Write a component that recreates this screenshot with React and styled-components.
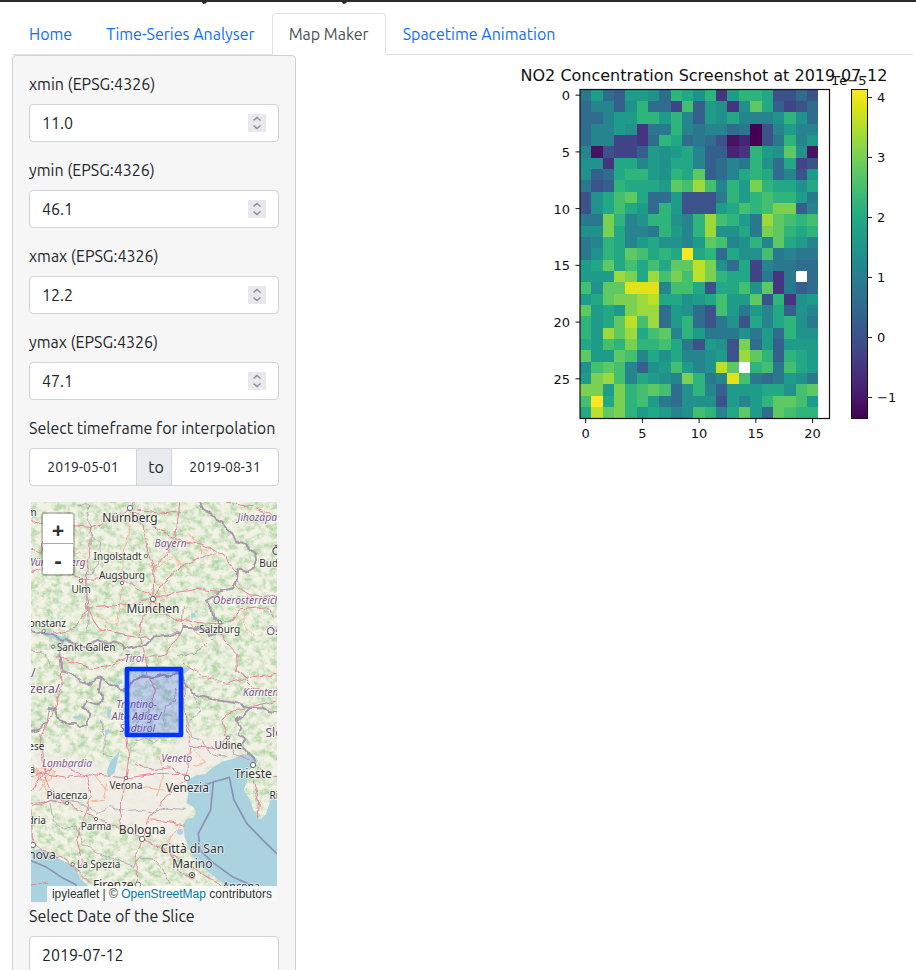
import React from "react";
import styled, { createGlobalStyle } from "styled-components";

const GlobalStyle = createGlobalStyle`
  *, *::before, *::after { box-sizing: border-box; }
  html { scrollbar-width: none; }
  body {
    margin: 0;
    background: #fff;
    color: #212529;
    font-family: Ubuntu, "Noto Sans", sans-serif;
    font-size: 16px;
    line-height: 24px;
  }
  input, button { font: inherit; color: inherit; }
`;

const TopBar = styled.header`
  height: 13px;
  border-top: 2px solid #2b2b2b;
  svg { display: block; }
`;

const Page = styled.div`
  padding: 0 3px 0 12px;
`;

const Tabs = styled.nav`
  display: flex;
  border-bottom: 1px solid #dee2e6;
`;

const Tab = styled.a`
  margin-bottom: -1px;
  padding: 8px 16px;
  border: 1px solid;
  border-color: ${(p) => (p.$active ? "#dee2e6 #dee2e6 #fff" : "transparent")};
  border-radius: 4px 4px 0 0;
  background: ${(p) => (p.$active ? "#fff" : "transparent")};
  color: ${(p) => (p.$active ? "#495057" : "#0d6efd")};
  text-decoration: none;
  white-space: nowrap;
`;

const Layout = styled.div`
  display: grid;
  grid-template-columns: 284px minmax(0, 1fr);
  align-items: start;
`;

const Sidebar = styled.form`
  padding: 16px;
  border: 1px solid #d0d0d0;
  border-radius: 4px;
  background: #f6f6f6;
`;

const Field = styled.div`
  margin-bottom: 16px;
`;

const Label = styled.label`
  display: block;
  margin-bottom: 8px;
  white-space: nowrap;
`;

const TextInput = styled.input`
  display: block;
  width: 100%;
  height: 38px;
  padding: 6px 12px;
  border: 1px solid #ced4da;
  border-radius: 4px;
  background: #fff;
  appearance: textfield;
  &::-webkit-inner-spin-button { appearance: none; margin: 0; }
`;

const NumberBox = styled.div`
  position: relative;
`;

const Spinner = styled.svg`
  position: absolute;
  right: 13px;
  top: 10px;
  background: #e9e9ed;
  pointer-events: none;
`;

const DateRange = styled.div`
  display: flex;
`;

const DateInput = styled(TextInput)`
  flex: 1;
  min-width: 0;
  width: 0;
  font-size: 14px;
  text-align: center;
  border-radius: ${(p) => (p.$end ? "0 4px 4px 0" : "4px 0 0 4px")};
`;

const RangeWord = styled.span`
  width: 36px;
  margin: 0 -1px;
  padding: 6px 0 6px 4px;
  border: 1px solid #ced4da;
  background: #e9ecef;
  text-align: center;
  z-index: 1;
`;

const MapBox = styled.div`
  position: relative;
  margin: 0 2px 2px;
  overflow: hidden;
  & > svg { display: block; width: 100%; height: auto; }
`;

const ZoomControl = styled.div`
  position: absolute;
  top: 10px;
  left: 10px;
  display: flex;
  flex-direction: column;
  border: 2px solid rgba(0, 0, 0, 0.2);
  border-radius: 4px;
  background-clip: padding-box;
`;

const ZoomButton = styled.button`
  width: 30px;
  height: 30px;
  padding: 0;
  border: 0;
  border-bottom: ${(p) => (p.$first ? "1px solid #aaa" : "0")};
  border-radius: ${(p) => (p.$first ? "2px 2px 0 0" : "0 0 2px 2px")};
  background: #fff;
  color: #333;
  font: bold 22px/28px "Noto Sans", sans-serif;
`;

const Attribution = styled.div`
  position: absolute;
  right: 0;
  bottom: 0;
  padding: 0 5px;
  background: rgba(255, 255, 255, 0.88);
  color: #333;
  font: 12px/16px "Liberation Sans", Arial, sans-serif;
  white-space: nowrap;
  a { color: #0078a8; text-decoration: none; }
`;

const Main = styled.main`
  padding: 1px 0 0 16px;
  & > svg { display: block; width: 100%; height: auto; max-width: 601px; }
`;

/* ---------- terrain map ---------- */

const FRONTIERS = [
  "M540 36L550 60L575 72L590 88L610 100L622 118L640 130L652 155L675 162L690 178L704 190L708 205L700 235L682 246L655 238L650 270L640 292L604 300L580 322L558 335L575 358L580 385L600 398L592 425L570 435L560 420L520 412L488 410L480 432L440 434L400 440L378 462L350 472L312 478L304 462L282 454L262 462L236 450L212 458L200 472L170 460L150 452L128 450L98 436L33 424",
  "M128 450L118 500L126 544L160 553L182 572L208 586L226 568L245 565L262 582L290 588L300 600L322 600L342 570L368 560L400 562L430 554L456 556L474 545L490 562L502 592L530 614L560 624L600 632L640 638L690 654L730 655L745 664L771 667",
  "M245 565L236 600L250 625L236 644L200 633L190 650L208 672L202 704L180 706L160 698L140 700L118 694L104 660L86 656L80 700L60 718L33 726",
  "M690 654L672 672L650 690L664 712L656 735L680 750L668 772L690 795L708 812",
];
const SEA_LINES = [
  "M580 876L572 960L535 1030L540 1080L575 1115L640 1162L700 1188",
  "M530 894L580 876L628 862L642 930L680 1000L730 1052L771 1092",
  "M33 1112L80 1132L130 1165L168 1184L174 1236",
];
const REGIONS = [
  "M176 42L206 46L200 80L216 108L204 130L224 150L244 156L240 214L222 240L196 256L204 300L196 340L208 386L196 426",
  "M470 500L520 490L550 470L580 440M520 612L540 660L504 700L512 740L550 752L570 790L620 800",
  "M330 780L350 750L380 742L402 760L420 742M244 690L256 740L250 790L296 810",
  "M33 940L90 935L120 920L150 936L190 940L230 970L270 950L330 964L370 960L400 970L440 955L492 958",
  "M90 940L100 990L130 1020L170 1010L190 1060L230 1090L290 1110L340 1130L360 1100L400 1108L430 1140L450 1180",
  "M430 690L440 650L462 634L470 590M33 480L70 490L90 520",
];
const ROADS = [
  "M33 90L70 110L140 105L210 112L260 96L330 60L345 36",
  "M328 60L370 110L382 180L402 236L400 300L398 326M330 56L420 120L466 150L480 36",
  "M398 328L430 280L490 225L585 188M466 150L520 156L570 172L620 205L650 250L650 290L690 315L771 320",
  "M398 236L440 195L466 150M480 62L420 70L350 60",
  "M33 250L90 230L160 256L190 268L300 266L340 285L396 322",
  "M204 354L280 348L350 340L398 326L450 310L530 298L610 305",
  "M398 330L425 365L470 388L540 398L600 402L640 388L660 360L740 350L760 385",
  "M212 112L208 200L196 268L204 354L160 420L100 432M204 354L234 416L300 430L390 446",
  "M398 330L366 390L360 440L376 500L384 556L406 600L390 650L350 700L320 735L326 800L318 864",
  "M110 500L210 534L260 528L340 500L385 505L440 490L486 420L490 350",
  "M600 408L612 450L650 490L652 540L700 590L740 610M490 520L550 560L620 580L700 560L771 550",
  "M490 560L498 700L510 770L500 850L420 850L318 864L220 854L140 862L70 850L33 860",
  "M350 820L390 840L450 830L500 858M510 770L560 770L590 780L620 745L605 690L640 660L700 650L771 630",
  "M620 748L640 790L696 815L730 850L771 860M700 870L716 930L712 980",
  "M70 850L90 900L140 938L230 985L300 1018L365 1047L430 1075L492 1118L560 1160L615 1190",
  "M318 864L302 930L300 1015M502 864L440 920L390 980L366 1046M396 990L450 995L490 1006",
  "M366 1048L348 1100L350 1185M33 950L100 930L140 938M33 960L38 1060L70 1080L140 1110L210 1180",
  "M60 730L70 800L70 850L30 910M70 850L110 820L200 858L214 920L170 1050L190 1110L170 1140",
  "M33 1188L80 1180M118 500L124 590L106 650L60 750L70 850M771 90L700 48L620 36",
  "M33 180L60 190L70 160L110 150M450 1080L470 1140L520 1170",
];
const LANES = [
  "M330 70L322 150L308 190L305 275M306 280L300 340L290 400",
  "M390 300L410 280L436 292L440 320L415 340L380 334Z",
  "M500 130L540 160L545 190M540 180L560 176M400 240L460 200L500 240",
  "M150 190L185 186M130 150L110 200M230 370L260 400L250 425",
  "M510 400L540 440L560 470M680 360L670 400L700 440",
  "M50 840L100 840L96 870L60 870Z M40 820L80 900M100 820L60 900",
  "M220 850L260 900L350 890L430 900M420 800L430 860L410 920M520 780L560 820L520 830",
  "M480 1000L450 1050L430 1080M200 940L250 930L260 880M340 1010L400 1030",
];
const LAKES = [
  "M68 424L96 430L120 438L146 442L152 456L120 456L98 444L76 438Z",
  "M300 782L292 812L284 848L266 862L260 846L272 812Z",
  "M512 372L524 368L528 380L514 386Z",
  "M160 680L182 674L188 684L162 686Z",
  "M254 722L266 716L270 726L258 736Z M262 660L274 658L270 684L262 680Z",
  "M285 578L306 570L308 580L290 586Z M484 544L496 532L512 534L494 552Z",
];

const LABELS = [
  ["Nürnberg", 330, 95, 36, "city"], ["Ingolstadt", 293, 209, 30, "city"],
  ["Augsburg", 306, 268, 30, "city"], ["Ulm", 183, 308, 30, "city"],
  ["München", 399, 369, 36, "city"], ["onstanz", 82, 411, 30, "city"],
  ["Salzburg", 599, 430, 30, "city"], ["Sankt Gallen", 198, 482, 30, "city"],
  ["m", 36, 78, 30, "city"], ["Č", 766, 195, 34, "city"], ["Bud", 746, 230, 30, "city"],
  ["Udine", 625, 777, 30, "city"], ["Trieste", 699, 863, 36, "city"],
  ["ese", 49, 779, 30, "city"], ["a", 37, 850, 30, "city"],
  ["Verona", 318, 896, 30, "city"], ["Venezia", 502, 905, 36, "city"],
  ["Piacenza", 141, 926, 30, "city"], ["Ri", 762, 926, 30, "city"],
  ["dria", 50, 1001, 30, "city"], ["Parma", 228, 1021, 30, "city"],
  ["Bologna", 367, 1032, 36, "city"], ["nova", 66, 1106, 36, "city"],
  ["Città di San", 517, 1089, 36, "city"], ["Marino", 517, 1135, 36, "city"],
  ["La Spezia", 236, 1133, 30, "city"], ["Firenze", 280, 1197, 36, "city"],
  ["Ancona", 664, 1200, 32, "city"],
  ["Bayern", 452, 171, 31, "region"], ["Jihozápa", 712, 92, 31, "region"],
  ["Württemberg", 108, 228, 30, "region"], ["Oberösterreich", 680, 341, 31, "region"],
  ["Tirol", 343, 515, 30, "region"], ["Kärnten", 722, 617, 30, "region"],
  ["Trentino-", 350, 653, 31, "region"], ["Alto Adige/", 350, 690, 31, "region"],
  ["Südtirol", 352, 725, 31, "region"], ["Veneto", 470, 815, 31, "region"],
  ["Lombardia", 141, 831, 31, "region"],
  ["Ös", 760, 434, 34, "country"], ["/", 40, 560, 38, "country"],
  ["zera/", 74, 608, 38, "country"], ["Slo", 762, 742, 36, "country"],
];
const TOWNS = [
  [330, 54, 8], [378, 198, 5], [306, 279, 5], [183, 272, 5], [399, 327, 8],
  [71, 423, 5], [600, 397, 5], [99, 470, 5], [624, 743, 5], [699, 825, 8],
  [318, 864, 5], [501, 864, 8], [141, 939, 5], [228, 987, 5], [366, 1047, 8],
  [158, 1123, 5], [354, 1184, 8], [39, 1065, 8],
];
const LABEL_COLORS = { city: "#303030", region: "#7d5587", country: "#75507d" };

function Lines({ paths, ...rest }) {
  return (
    <g fill="none" strokeLinejoin="round" strokeLinecap="round" {...rest}>
      {paths.map((d) => <path key={d} d={d} />)}
    </g>
  );
}

function TerrainMap() {
  return (
    <svg viewBox="33 36 738 1200" role="img" aria-label="Map of the Alps with the selected area">
      <defs>
        <filter id="forest" x="0" y="0" width="1" height="1" colorInterpolationFilters="sRGB">
          <feTurbulence type="fractalNoise" baseFrequency="0.04 0.05" numOctaves="5" seed="8" />
          <feColorMatrix values="0 0 0 0 0.71  0 0 0 0 0.84  0 0 0 0 0.66  0 3 0 0 -1.15" />
        </filter>
        <filter id="relief" x="0" y="0" width="1" height="1" colorInterpolationFilters="sRGB">
          <feTurbulence type="fractalNoise" baseFrequency="0.09" numOctaves="3" seed="21" />
          <feColorMatrix values="0 0 0 0 0.96  0 0 0 0 0.96  0 0 0 0 0.91  0 0 4 0 -1.8" />
        </filter>
        <filter id="wobble" x="-0.1" y="-0.1" width="1.2" height="1.2">
          <feTurbulence type="fractalNoise" baseFrequency="0.035" numOctaves="2" seed="4" />
          <feDisplacementMap in="SourceGraphic" scale="18" xChannelSelector="R" yChannelSelector="G" />
        </filter>
        <filter id="soft"><feGaussianBlur stdDeviation="16" /></filter>
      </defs>
      <rect x="33" y="36" width="738" height="1200" fill="#f1f2e4" />
      <rect x="33" y="36" width="738" height="1200" filter="url(#forest)" />
      <rect x="33" y="36" width="738" height="1200" filter="url(#relief)" opacity="0.6" />
      <path
        d="M33 780L180 800L320 830L430 800L500 720L600 740L680 790L560 850L500 960L495 1070L370 1030L220 970L120 920L33 920Z"
        fill="#f2eee7" opacity="0.9" filter="url(#soft)"
      />
      <g fill="#aad3df">
        <path d="M500 872L528 856L556 852L575 835L605 815L640 806L668 792L700 796L714 812L696 834L676 848L680 876L672 900L690 930L700 960L720 990L738 972L750 935L771 905V1236H680L640 1195L610 1180L570 1150L535 1124L508 1080L494 1040L490 1004L498 988L520 984L528 965L520 950L500 940L505 910Z" />
        <path d="M33 1085L60 1076L85 1090L120 1108L152 1124L170 1138L180 1165L205 1188L215 1236H33Z" />
        <circle cx="480" cy="1025" r="9" />
        {LAKES.map((d) => <path key={d} d={d} />)}
      </g>
      <Lines paths={LANES} stroke="#f4b597" strokeWidth="3" filter="url(#wobble)" />
      <Lines paths={ROADS} stroke="#e3849c" strokeWidth="3" filter="url(#wobble)" />
      <Lines paths={REGIONS} stroke="#a697a9" strokeWidth="3" opacity="0.75" filter="url(#wobble)" />
      <Lines paths={FRONTIERS} stroke="#a08fa5" strokeWidth="6" opacity="0.9" filter="url(#wobble)" />
      <Lines paths={SEA_LINES} stroke="#8c91b3" strokeWidth="5" />
      {TOWNS.map(([x, y, r]) => (
        <circle key={`${x}-${y}`} cx={x} cy={y} r={r} fill="#fff" stroke="#555" strokeWidth="2.5" />
      ))}
      <g fill="none" stroke="#333" strokeWidth="2.5">
        <circle cx="516" cy="1155" r="8" fill="#fff" />
        <circle cx="516" cy="1155" r="2.5" fill="#333" />
      </g>
      <g fontFamily='"Noto Sans", sans-serif' textAnchor="middle" paintOrder="stroke" stroke="#fff" strokeOpacity="0.75" strokeWidth="5" strokeLinejoin="round">
        {LABELS.map(([text, x, y, size, kind]) => (
          <text key={text + x} x={x} y={y} fontSize={size} fill={LABEL_COLORS[kind]} fontStyle={kind === "region" ? "italic" : "normal"}>
            {text}
          </text>
        ))}
      </g>
      <rect x="321" y="537" width="162" height="198" fill="#0033ff" fillOpacity="0.2" stroke="#0033ff" strokeWidth="14" strokeLinejoin="round" />
    </svg>
  );
}

/* ---------- concentration plot ---------- */

const VIRIDIS = [
  "#440154", "#471365", "#482475", "#463480", "#414487", "#3b528b", "#355f8d",
  "#2f6c8e", "#2a788e", "#25848e", "#21918c", "#1e9c89", "#22a884", "#2fb47c",
  "#44bf70", "#5ec962", "#7ad151", "#9bd93c", "#bddf26", "#dfe318", "#fde725",
];

/* One letter per cell, a = lowest and u = highest; "-" marks a missing value. */
const GRID = [
  "ilhgllkhnmkndlnnmffhf",
  "hjjgknhheoglkdkpmgefh",
  "hhjllnnlnjglkmjjjknkh",
  "hjjlkdiinjijjhiafjljj",
  "hjjeedhnmhihfbcafinjl",
  "jbfeeglklmjggcdnlkpkb",
  "kkdmmjlkmmjghjinkhmef",
  "kghmnnlknmpghjmnmhjfl",
  "ifgnmmmlporojnlqnmmkm",
  "fkmopmhhlfffinlnonnli",
  "fkmomlhnlffflmonoqqgj",
  "iiqnjknnkjnronlirpono",
  "kkqmjjinljnrkkmiqpnmn",
  "ijnmjlmkkjlpojknjpmlj",
  "iknmpomnmumnhmkkoijii",
  "lmpmomomppsqkhmejiihh",
  "lllrqmroqosqnmmeidi-h",
  "okpptttjoomfmmokpdigh",
  "lmpqqrsmmklmollpfndkl",
  "plmlqrrhlkhfoliljmgkj",
  "nlmpsorhlnhfikfmjmnki",
  "nlrprmopjnliiikilhnkk",
  "mlonqnnomiflkfqhlglll",
  "pllpojmkmjjklfrpngnml",
  "kopojgkloljksp-noioml",
  "lqrojmlkjqnijtoihilki",
  "qqlqnopohknjglllmmkop",
  "oumqnolihkkkfljlnppol",
  "mspqnlmljkonjmplhponn",
];

const PLOT = { left: 580, top: 89.5, right: 829.5, bottom: 418.5 };
const CELL = (PLOT.bottom - PLOT.top) / GRID.length;
const edge = (start, i) => Math.round(start + i * CELL);

function ConcentrationPlot() {
  return (
    <svg viewBox="312 56 601 400" role="img" aria-label="NO2 concentration heat map">
      <defs>
        <linearGradient id="scale" x1="0" y1="1" x2="0" y2="0">
          {VIRIDIS.map((c, i) => <stop key={c} offset={i / 20} stopColor={c} />)}
        </linearGradient>
      </defs>
      <g shapeRendering="crispEdges">
        {GRID.flatMap((row, r) =>
          [...row].map((ch, c) => {
            if (ch === "-") return null;
            const x = edge(PLOT.left, c);
            const y = edge(PLOT.top, r);
            return (
              <rect
                key={`${r}-${c}`} x={x} y={y}
                width={edge(PLOT.left, c + 1) - x} height={edge(PLOT.top, r + 1) - y}
                fill={VIRIDIS[ch.charCodeAt(0) - 97]}
              />
            );
          })
        )}
      </g>
      <rect x="851.5" y="89.5" width="16" height="329" fill="url(#scale)" stroke="#111" />
      <rect x={PLOT.left} y={PLOT.top} width={PLOT.right - PLOT.left} height={PLOT.bottom - PLOT.top} fill="none" stroke="#111" strokeWidth="1.2" />
      <g fontFamily='"DejaVu Sans", sans-serif' fontSize="13" fill="#111" stroke="none">
        {[0, 5, 10, 15, 20, 25].map((v) => {
          const y = PLOT.top + (v + 0.5) * CELL;
          return (
            <g key={v}>
              <path d={`M575.5 ${y}H580`} stroke="#111" />
              <text x="570" y={y + 5} textAnchor="end">{v}</text>
            </g>
          );
        })}
        {[0, 5, 10, 15, 20].map((v) => {
          const x = PLOT.left + (v + 0.5) * CELL;
          return (
            <g key={v}>
              <path d={`M${x} 418.5V423`} stroke="#111" />
              <text x={x} y="438" textAnchor="middle">{v}</text>
            </g>
          );
        })}
        {["4", "3", "2", "1", "0", "−1"].map((v, i) => (
          <g key={v}>
            <path d={`M867.5 ${97.5 + i * 60}H872`} stroke="#111" />
            <text x="877" y={102 + i * 60}>{v}</text>
          </g>
        ))}
        <text x="831" y="85">1e−5</text>
        <text x="704" y="81" fontSize="16" textAnchor="middle">NO2 Concentration Screenshot at 2019-07-12</text>
      </g>
    </svg>
  );
}

/* ---------- page ---------- */

const TABS = ["Home", "Time-Series Analyser", "Map Maker", "Spacetime Animation"];
const BOUNDS = [["xmin", "11.0"], ["ymin", "46.1"], ["xmax", "12.2"], ["ymax", "47.1"]];

function NumberField({ name, value }) {
  return (
    <Field>
      <Label htmlFor={name}>{name} (EPSG:4326)</Label>
      <NumberBox>
        <TextInput id={name} type="number" step="0.1" defaultValue={value} />
        <Spinner width="18" height="18" viewBox="0 0 18 18" fill="none" stroke="#8f8f9d" strokeWidth="1.5" aria-hidden="true">
          <path d="M5.5 6.5L9 3.5L12.5 6.5M5.5 11.5L9 14.5L12.5 11.5" />
        </Spinner>
      </NumberBox>
    </Field>
  );
}

export default function App() {
  return (
    <>
      <GlobalStyle />
      <TopBar>
        <svg width="400" height="3" viewBox="0 0 400 3" fill="#212529" aria-hidden="true">
          <path d="M202 0H207Q206 2 203 2ZM342 0H347Q346 2 343 2Z" />
        </svg>
      </TopBar>
      <Page>
        <Tabs>
          {TABS.map((t) => (
            <Tab key={t} href="#" $active={t === "Map Maker"}>{t}</Tab>
          ))}
        </Tabs>
        <Layout>
          <Sidebar>
            {BOUNDS.map(([name, value]) => <NumberField key={name} name={name} value={value} />)}
            <Field>
              <Label htmlFor="start">Select timeframe for interpolation</Label>
              <DateRange>
                <DateInput id="start" type="text" defaultValue="2019-05-01" />
                <RangeWord>to</RangeWord>
                <DateInput $end type="text" aria-label="End date" defaultValue="2019-08-31" />
              </DateRange>
            </Field>
            <MapBox>
              <TerrainMap />
              <ZoomControl>
                <ZoomButton type="button" $first aria-label="Zoom in">+</ZoomButton>
                <ZoomButton type="button" aria-label="Zoom out">-</ZoomButton>
              </ZoomControl>
              <Attribution>
                ipyleaflet | © <a href="#osm">OpenStreetMap</a> contributors
              </Attribution>
            </MapBox>
            <Label htmlFor="slice">Select Date of the Slice</Label>
            <TextInput id="slice" type="text" defaultValue="2019-07-12" />
          </Sidebar>
          <Main>
            <ConcentrationPlot />
          </Main>
        </Layout>
      </Page>
    </>
  );
}
